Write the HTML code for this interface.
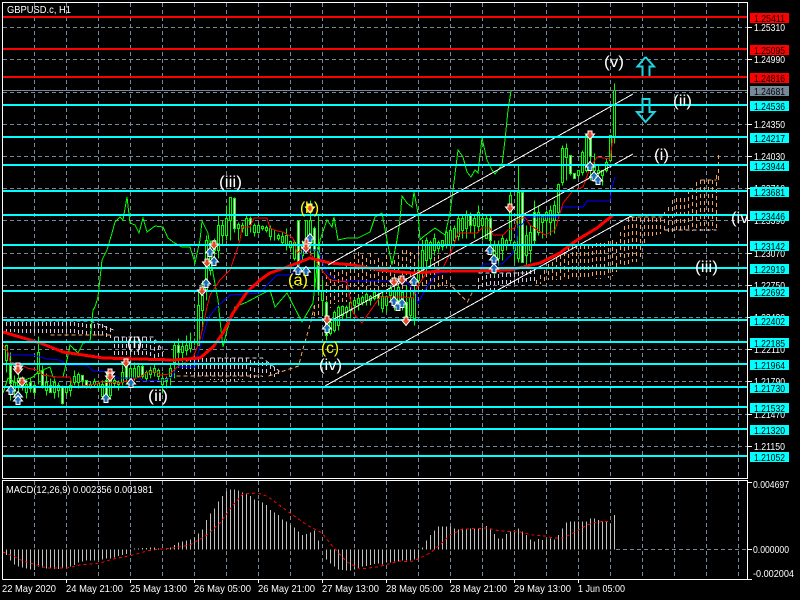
<!DOCTYPE html>
<html><head><meta charset="utf-8"><title>GBPUSD.c, H1</title>
<style>
html,body{margin:0;padding:0;background:#000;width:800px;height:600px;overflow:hidden}
svg{display:block}
text{font-family:"Liberation Sans",sans-serif;font-size:10.5px}
.w{font-size:16px;fill:#fff}
.y{font-size:16px;fill:#ff0}
.l{fill:#fff}
.t{fill:#000}
</style></head><body>
<svg width="800" height="600" viewBox="0 0 800 600" xmlns="http://www.w3.org/2000/svg">
<defs>
<clipPath id="m"><rect x="3" y="3" width="744" height="475"/></clipPath>
<g id="r"><path d="M-2 -4H2V-1H4.5L0 4.5L-4.5 -1H-2Z" fill="#e2492a" stroke="#fff" stroke-width="1"/></g>
<g id="b"><path d="M-2 4.5H2V1H4.5L0 -4.5L-4.5 1H-2Z" fill="#1b6db5" stroke="#fff" stroke-width="1"/></g>
</defs>
<rect width="800" height="600" fill="#000"/>
<!-- grid -->
<g stroke="#778899" stroke-width="1" stroke-dasharray="4 3" shape-rendering="crispEdges" fill="none">
<path d="M3 27.5H747M3 59.5H747M3 92.5H747M3 124.5H747M3 156.5H747M3 188.5H747M3 220.5H747M3 253.5H747M3 285.5H747M3 317.5H747M3 349.5H747M3 381.5H747M3 414.5H747M3 446.5H747"/>
<path d="M34.5 3V478M66.5 3V478M98.5 3V478M130.5 3V478M162.5 3V478M194.5 3V478M226.5 3V478M258.5 3V478M290.5 3V478M322.5 3V478M354.5 3V478M386.5 3V478M418.5 3V478M450.5 3V478M482.5 3V478M514.5 3V478M546.5 3V478M578.5 3V478M610.5 3V478M642.5 3V478M674.5 3V478M706.5 3V478M738.5 3V478"/>
<path d="M34.5 481V579M66.5 481V579M98.5 481V579M130.5 481V579M162.5 481V579M194.5 481V579M226.5 481V579M258.5 481V579M290.5 481V579M322.5 481V579M354.5 481V579M386.5 481V579M418.5 481V579M450.5 481V579M482.5 481V579M514.5 481V579M546.5 481V579M578.5 481V579M610.5 481V579M642.5 481V579M674.5 481V579M706.5 481V579M738.5 481V579"/>
<path d="M616 549.5H747"/>
</g>
<g clip-path="url(#m)">
<!-- cloud -->
<g fill="none" stroke-width="1" stroke-dasharray="4 3" shape-rendering="crispEdges" transform="translate(.5 0)">
<path stroke="#dcc8dc" d="M6 322V332M10 322V332M14 322V332M18 322V333M22 322V333M26 322V333M30 322V334M34 322V334M38 322V334M42 322V334M46 322V335M50 322V335M54 322V335M58 322V335M62 322V336M66 322V336M70 322V336M74 322V336M78 323V337M82 323V337M86 324V338M90 324V338M94 324V338M98 324V338M102 324V338M106 326V338M110 328V338M114 337V358M118 337V358M122 337V358M126 337V358M130 337V358M134 337V358M138 337V358M142 337V358M146 337V358M150 338V358M154 340V358M158 346V358M162 352V358M174 357V362M178 357V372M182 358V372M186 358V374M190 358V374M194 358V376M198 358V376M202 358V378M206 358V378M210 358V380M214 358V380M218 358V380M222 358V381M226 358V381M230 358V381M234 358V381M238 358V380M242 358V380M246 358V379M250 360V378M254 361V378M258 362V378M262 362V377M266 362V376M270 365V377M274 367V377M278 370V376M478 278V290M482 276V290M486 275V290M490 274V290M494 274V290M498 274V288M502 273V288M506 273V288M510 273V287M514 273V287M518 272V286M522 271V286M526 271V285M530 270V284M534 270V284"/>
<path stroke="#f4a460" d="M314 305V320M318 290V318M322 280V316M326 275V312M330 272V308M334 268V304M338 272V302M342 270V302M346 265V302M350 262V302M354 255V301M358 252V301M362 255V300M366 258V300M370 253V300M374 260V299M378 258V298M382 262V298M386 255V297M390 265V297M394 260V296M398 255V296M402 250V295M406 250V295M410 252V294M414 255V294M418 245V293M422 240V292M426 245V292M430 250V291M434 250V290M438 255V290M442 275V289M446 280V288M450 285V287M536 280V287M540 275V284M544 270V282M548 264V280M552 262V280M556 258V280M560 255V280M564 252V279M568 247V279M572 245V279M576 245V279M580 245V279M584 245V279M588 245V279M592 244V279M596 243V279M600 243V279M604 243V278M608 241V278M612 240V276M616 242V272M620 232V268M624 226V266M628 218V264M632 217V262M636 217V262M640 218V258M644 218V246M648 218V238M652 218V236M656 218V235M660 218V234M664 212V233M668 207V232M672 200V232M676 198V232M680 198V232M684 198V231M688 190V231M692 188V231M696 182V231M700 180V231M704 180V231M708 180V231M712 180V230M716 175V230"/>
<path stroke="#f4a460" d="M50 335H112M176 376H262M268 376L298 366L303 347L310 323L314 305M452 287L467 302L473 290M718 155V180M700 180H716M630 217H662"/>
<path stroke="#dcc8dc" d="M6 321H90L113 330M114 337H153L163 352M210 358H262L280 372M478 273H534M664 230H716"/>
</g>
<!-- candles -->
<g transform="translate(.5 .5)" fill="none" stroke="#0f0" stroke-width="1" shape-rendering="crispEdges">
<path d="M6 344V372M10 352V400M14 375V395M18 370V400M22 376V390M26 380V398M30 378V392M34 383V395M38 336V384M42 365V388M46 373V395M50 378V392M54 378V398M58 382V397M62 385V404M66 385V395M70 380V396M74 370V385M78 372V388M82 375V385M86 380V388M90 381V388M94 378V386M98 380V390M102 380V398M106 372V396M110 372V398M114 376V386M118 380V390M122 365V385M126 358V382M130 362V382M134 362V380M138 364V378M142 364V378M146 370V380M150 366V378M154 364V376M158 368V380M162 372V393M166 376V388M170 364V385M174 342V378M178 338V366M182 340V362M186 335V355M190 332V352M194 338V345M198 290V345M202 280V330M206 235V300M210 240V275M214 238V265M218 215V258M222 220V245M226 205V240M230 197V240M234 197V232M238 222V240M242 222V232M246 215V235M250 216V232M254 223V236M258 223V233M262 225V230M266 225V232M270 225V240M274 230V240M278 233V240M282 232V245M286 228V250M290 240V250M294 240V260M298 220V275M302 240V262M306 220V252M310 200V255M314 226V290M318 215V295M322 280V315M326 300V340M330 320V335M334 310V332M338 305V330M342 305V320M346 305V318M350 300V318M354 298V312M358 295V310M362 295V305M366 292V305M370 295V305M374 290V300M378 292V305M382 292V312M386 295V312M390 285V300M394 285V310M398 285V305M402 290V310M406 285V325M410 290V320M414 285V325M418 260V285M422 240V275M426 237V270M430 240V265M434 233V255M438 240V252M442 240V250M446 230V248M450 225V248M454 225V246M458 215V240M462 215V238M466 210V238M470 212V232M474 215V238M478 205V232M482 215V240M486 215V238M490 215V255M494 240V275M498 240V265M502 235V260M506 238V250M510 190V245M514 240V262M518 165V262M522 192V262M526 225V265M530 225V262M534 200V245M538 205V235M542 215V238M546 210V235M550 205V235M554 200V233M558 183V216M562 145V185M566 143V180M570 155V175M574 173V178M578 170V178M582 150V175M586 135V172M590 135V180M594 153V172M598 165V175M602 170V185M606 158V172M610 135V162M614 83V143"/>
<path fill="#000" d="M5 345h2v15h-2zM13 382h2v8h-2zM17 378h2v7h-2zM21 380h2v6h-2zM25 384h2v8h-2zM37 352h2v21h-2zM45 382h2v8h-2zM53 382h2v10h-2zM57 385h2v5h-2zM65 387h2v5h-2zM69 385h2v5h-2zM73 376h2v6h-2zM77 374h2v8h-2zM89 384h2v2h-2zM93 381h2v3h-2zM97 383h2v3h-2zM101 384h2v12h-2zM109 376h2v19h-2zM113 380h2v3h-2zM117 382h2v2h-2zM121 372h2v10h-2zM129 368h2v12h-2zM133 368h2v10h-2zM137 366h2v10h-2zM145 372h2v6h-2zM149 370h2v4h-2zM153 368h2v4h-2zM157 370h2v6h-2zM161 378h2v6h-2zM165 378h2v2h-2zM169 368h2v8h-2zM173 345h2v17h-2zM181 346h2v6h-2zM185 345h2v5h-2zM189 342h2v6h-2zM197 305h2v40h-2zM201 295h2v15h-2zM205 240h2v50h-2zM209 250h2v20h-2zM217 225h2v25h-2zM221 225h2v10h-2zM225 218h2v17h-2zM229 197h2v23h-2zM237 224h2v4h-2zM241 225h2v3h-2zM245 218h2v17h-2zM253 225h2v7h-2zM257 225h2v7h-2zM261 226h2v2h-2zM265 227h2v3h-2zM269 228h2v8h-2zM277 235h2v3h-2zM281 236h2v6h-2zM285 235h2v10h-2zM289 241h2v6h-2zM293 242h2v16h-2zM301 245h2v10h-2zM305 220h2v25h-2zM309 220h2v25h-2zM321 290h2v10h-2zM329 322h2v11h-2zM333 312h2v18h-2zM337 307h2v18h-2zM341 306h2v9h-2zM345 307h2v5h-2zM349 302h2v8h-2zM353 300h2v5h-2zM357 298h2v5h-2zM361 297h2v5h-2zM365 294h2v6h-2zM369 296h2v4h-2zM373 292h2v6h-2zM381 296h2v12h-2zM385 296h2v9h-2zM389 288h2v7h-2zM393 290h2v10h-2zM397 287h2v13h-2zM401 292h2v10h-2zM409 297h2v18h-2zM413 292h2v26h-2zM417 270h2v10h-2zM421 250h2v20h-2zM425 240h2v20h-2zM429 242h2v16h-2zM433 238h2v12h-2zM437 242h2v6h-2zM441 240h2v6h-2zM445 232h2v12h-2zM449 230h2v14h-2zM453 228h2v12h-2zM457 218h2v18h-2zM461 218h2v12h-2zM465 215h2v13h-2zM473 218h2v7h-2zM477 212h2v14h-2zM481 218h2v7h-2zM485 218h2v20h-2zM493 245h2v10h-2zM497 245h2v13h-2zM501 238h2v12h-2zM505 240h2v5h-2zM509 195h2v45h-2zM513 242h2v8h-2zM517 192h2v66h-2zM525 235h2v20h-2zM529 232h2v18h-2zM537 212h2v20h-2zM541 216h2v6h-2zM545 212h2v8h-2zM549 210h2v12h-2zM553 205h2v15h-2zM557 184h2v28h-2zM561 148h2v34h-2zM565 148h2v9h-2zM577 170h2v5h-2zM581 152h2v20h-2zM585 135h2v35h-2zM593 165h2v5h-2zM597 170h2v3h-2zM601 170h2v5h-2zM605 162h2v8h-2zM609 135h2v25h-2zM613 90h2v47h-2z"/>
<path fill="#fff" d="M9 365h2v18h-2zM29 382h2v6h-2zM33 385h2v7h-2zM41 370h2v15h-2zM49 385h2v7h-2zM61 387h2v16h-2zM81 375h2v5h-2zM85 380h2v6h-2zM105 380h2v16h-2zM125 366h2v12h-2zM141 366h2v10h-2zM177 345h2v7h-2zM213 240h2v10h-2zM233 198h2v30h-2zM249 218h2v6h-2zM297 220h2v45h-2zM313 228h2v22h-2zM317 247h2v43h-2zM325 302h2v33h-2zM377 294h2v4h-2zM405 302h2v21h-2zM469 215h2v10h-2zM489 218h2v22h-2zM521 192h2v70h-2zM533 212h2v28h-2zM569 155h2v18h-2zM573 173h2v5h-2zM589 135h2v21h-2z"/>
</g>
<!-- indicator lines -->
<g fill="none" shape-rendering="crispEdges">
<polyline stroke="#0f0" points="3,393 8,378 17,383 33,377 38,372 50,367 53,377 63,377 67,360 70,345 78,353 83,343 90,342 93,310 95,307 98,297 102,260 107,250 112,233 115,222 120,217 123,220 127,197 130,223 135,225 139,233 143,218 147,232 155,226 163,227 168,238 173,242 182,247 190,247 195,263 200,240 202,221 208,233 213,273 218,300 221,330 223,347 227,330 235,307 247,302 260,295 270,290 275,307 287,293 302,322 313,303 320,240 327,220 332,227 334,217 338,240 347,238 358,238 370,232 375,217 382,213 387,240 392,265 397,240 400,220 402,196 407,203 412,207 414,192 418,213 420,240 423,237 435,228 445,235 450,213 453,190 458,150 463,157 467,172 471,177 475,170 478,173 482,138 487,160 492,170 495,174 502,165 505,140 508,110 511,91"/>
<polyline stroke="#00f" points="3,345 10,355 33,355 47,359 60,360 67,365 87,365 93,371 110,372 115,378 140,378 143,381 165,380 172,377 177,367 195,367 197,357 203,337 208,318 217,307 230,295 260,293 267,285 277,275 290,275 298,268 303,250 318,250 327,273 337,281 390,281 407,282 417,295 418,303 427,287 437,273 480,270 483,264 502,264 513,253 517,240 518,225 523,224 525,217 558,217 563,207 583,207 587,201 610,201 612,187 615,177"/>
<polyline stroke="#f00" points="3,345 8,352 10,362 20,364 27,368 37,370 43,375 57,377 70,377 73,387 97,384 100,382 120,383 140,377 148,372 157,372 160,375 170,374 177,367 193,358 200,340 207,307 210,295 220,280 230,270 237,250 240,240 242,227 250,227 254,218 267,218 270,228 277,231 283,232 293,238 297,253 305,247 313,257 320,268 330,280 347,282 353,313 362,323 380,297 390,297 403,297 413,298 417,287 427,272 443,268 453,247 458,233 477,233 482,228 490,228 493,235 503,235 508,230 515,228 517,220 525,217 530,225 545,235 555,230 563,203 572,192 583,187 590,168 597,157 610,159 613,138"/>
</g>
<polyline fill="none" stroke="#f00" stroke-width="3" shape-rendering="crispEdges" points="3,332 30,340 43,344 63,352 83,355 103,358 140,359 173,360 200,358 213,347 223,333 233,313 247,292 260,280 270,273 290,266 310,258 330,263 353,265 380,270 413,273 443,271 470,271 510,270 540,263 560,253 577,240 597,228 613,215"/>
<!-- channels -->
<g stroke="#fff" fill="none" stroke-width="1" shape-rendering="crispEdges">
<path d="M325 386L633 215M325 324L633 154M328 265L633 94"/>
</g>
<!-- levels -->
<g shape-rendering="crispEdges">
<path stroke="#778899" d="M3 90.5H747"/>
<path stroke="#f00" stroke-width="2" d="M3 17H747M3 49H747M3 77H747"/>
<path stroke="#0ff" stroke-width="2" d="M3 105H747M3 137H747M3 165H747M3 191H747M3 215H747M3 245H747M3 268H747M3 291H747M3 320H747M3 342H747M3 364H747M3 387H747M3 407H747M3 429H747M3 456H747"/>
</g>
<!-- markers -->
<use href="#r" x="18" y="367"/><use href="#r" x="18" y="370"/><use href="#r" x="22" y="382"/><use href="#r" x="126" y="363"/><use href="#r" x="110" y="373"/><use href="#r" x="110" y="377"/><use href="#r" x="214" y="245"/><use href="#r" x="207" y="263"/><use href="#r" x="202" y="291"/><use href="#r" x="310" y="208"/><use href="#r" x="307" y="243"/><use href="#r" x="306" y="248"/><use href="#r" x="327" y="320"/><use href="#r" x="394" y="282"/><use href="#r" x="402" y="280"/><use href="#r" x="406" y="321"/><use href="#r" x="510" y="208"/><use href="#r" x="590" y="135"/>
<use href="#b" x="11" y="390"/><use href="#b" x="18" y="396"/><use href="#b" x="18" y="400"/><use href="#b" x="106" y="398"/><use href="#b" x="131" y="383"/><use href="#b" x="210" y="252"/><use href="#b" x="214" y="261"/><use href="#b" x="206" y="283"/><use href="#b" x="298" y="270"/><use href="#b" x="306" y="271"/><use href="#b" x="327" y="328"/><use href="#b" x="394" y="301"/><use href="#b" x="398" y="306"/><use href="#b" x="402" y="303"/><use href="#b" x="414" y="281"/><use href="#b" x="490" y="250"/><use href="#b" x="494" y="259"/><use href="#b" x="494" y="268"/><use href="#b" x="310" y="238"/><use href="#b" x="590" y="166"/><use href="#b" x="594" y="176"/><use href="#b" x="598" y="180"/>
<!-- arrows -->
<path d="M645.5 57L637.5 66.5H642.5V76M649.5 76V66.5H654L645.5 57" fill="none" stroke="#1fd5e0" stroke-width="2"/>
<path d="M642.5 99V112H637L645.5 122L654.5 112H649.5V99Z" fill="none" stroke="#1fd5e0" stroke-width="2"/>
<!-- wave labels -->
<text class="w" x="219" y="187" textLength="23" lengthAdjust="spacingAndGlyphs">(iii)</text>
<text class="y" x="300" y="213" textLength="19" lengthAdjust="spacingAndGlyphs">(b)</text>
<text class="y" x="288" y="285" textLength="20" lengthAdjust="spacingAndGlyphs">(a)</text>
<text class="y" x="321" y="353" textLength="18" lengthAdjust="spacingAndGlyphs">(c)</text>
<text class="w" x="319" y="370" textLength="23" lengthAdjust="spacingAndGlyphs">(iv)</text>
<text class="w" x="127" y="348" textLength="15" lengthAdjust="spacingAndGlyphs">(i)</text>
<text class="w" x="148" y="401" textLength="20" lengthAdjust="spacingAndGlyphs">(ii)</text>
<text class="w" x="604" y="67" textLength="20" lengthAdjust="spacingAndGlyphs">(v)</text>
<text class="w" x="673" y="106" textLength="19" lengthAdjust="spacingAndGlyphs">(ii)</text>
<text class="w" x="654" y="160" textLength="15" lengthAdjust="spacingAndGlyphs">(i)</text>
<text class="w" x="731" y="223" textLength="23" lengthAdjust="spacingAndGlyphs">(iv)</text>
<text class="w" x="695" y="272" textLength="23" lengthAdjust="spacingAndGlyphs">(iii)</text>
</g>
<!-- MACD -->
<g transform="translate(0 470) scale(1 .33333)" fill="none" shape-rendering="crispEdges">
<path stroke="#c0c0c0" vector-effect="non-scaling-stroke" d="M6.5 238V255M10.5 238V272M14.5 238V283M18.5 238V290M22.5 238V293M26.5 238V295M30.5 238V298M34.5 238V300M38.5 238V290M42.5 238V292M46.5 238V295M50.5 238V296M54.5 238V297M58.5 238V297M62.5 238V296M66.5 238V293M70.5 238V290M74.5 238V285M78.5 238V278M82.5 238V275M86.5 238V272M90.5 238V272M94.5 238V272M98.5 238V270M102.5 238V268M106.5 238V266M110.5 238V265M114.5 238V262M118.5 238V258M122.5 238V255M126.5 238V252M130.5 238V245M134.5 235V238M138.5 235V238M142.5 234V238M146.5 234V238M150.5 232V238M154.5 232V238M158.5 236V238M162.5 236V238M166.5 236V238M170.5 232V238M174.5 225V238M178.5 218V238M182.5 214V238M186.5 212V238M190.5 208V238M194.5 203V238M198.5 190V238M202.5 178V238M206.5 150V238M210.5 130V238M214.5 115V238M218.5 95V238M222.5 78V238M226.5 65V238M230.5 58V238M234.5 58V238M238.5 62V238M242.5 68V238M246.5 70V238M250.5 78V238M254.5 88V238M258.5 92V238M262.5 98V238M266.5 105V238M270.5 120V238M274.5 128V238M278.5 135V238M282.5 148V238M286.5 155V238M290.5 165V238M294.5 172V238M298.5 185V238M302.5 195V238M306.5 192V238M310.5 188V238M314.5 182V238M318.5 212V238M326.5 238V268M330.5 238V280M334.5 238V290M338.5 238V298M342.5 238V300M346.5 238V302M350.5 238V302M354.5 238V298M358.5 238V295M362.5 238V290M366.5 238V288M370.5 238V285M374.5 238V282M378.5 238V280M382.5 238V283M386.5 238V278M390.5 238V278M394.5 238V275M398.5 238V275M402.5 238V272M406.5 238V272M410.5 238V272M414.5 238V268M418.5 238V265M422.5 232V238M426.5 212V238M430.5 195V238M434.5 182V238M438.5 170V238M442.5 170V238M446.5 170V238M450.5 170V238M454.5 175V238M458.5 178V238M462.5 175V238M466.5 175V238M470.5 175V238M474.5 175V238M478.5 175V238M482.5 172V238M486.5 168V238M490.5 175V238M494.5 192V238M498.5 205V238M502.5 205V238M506.5 192V238M510.5 185V238M514.5 188V238M518.5 175V238M522.5 185V238M526.5 195V238M530.5 208V238M534.5 215V238M538.5 207V238M542.5 210V238M546.5 208V238M550.5 205V238M554.5 208V238M558.5 195V238M562.5 175V238M566.5 158V238M570.5 155V238M574.5 155V238M578.5 155V238M582.5 155V238M586.5 155V238M590.5 145V238M594.5 145V238M598.5 150V238M602.5 155V238M606.5 155V238M610.5 160V238M614.5 135V238"/>
</g>
<g fill="none" stroke="#f00" stroke-dasharray="3 3" shape-rendering="crispEdges">
<polyline points="3,552 13,556 23,561 37,565 47,568 67,568 80,565 100,563 113,559 133,555 147,551 160,549 173,548 190,545 207,535 220,523 233,505 243,494 257,493 267,496 290,513 307,525 322,533 333,547 347,562 360,569 377,567 400,561 410,562 418,559 430,553 442,543 450,535 463,529 487,528 500,531 520,532 533,535 545,536 553,538 563,538 577,531 587,525 597,522 612,521"/>
</g>
<!-- frames -->
<g fill="none" stroke="#fff" stroke-width="1" shape-rendering="crispEdges">
<path d="M2.5 478.5V2.5H747.5V478.5H2.5"/>
<path d="M2.5 579.5V480.5H747.5V579.5H2.5"/>
<path d="M748 27.5h4M748 59.5h4M748 124.5h4M748 156.5h4M748 188.5h4M748 220.5h4M748 253.5h4M748 285.5h4M748 317.5h4M748 349.5h4M748 381.5h4M748 414.5h4M748 446.5h4M748 482.5h4M748 549.5h4M748 579.5h4"/>
<path d="M66.5 580v3M130.5 580v3M194.5 580v3M258.5 580v3M322.5 580v3M386.5 580v3M450.5 580v3M514.5 580v3M578.5 580v3"/>
</g>
<!-- axis labels -->
<text class="l" x="754" y="31" textLength="31" lengthAdjust="spacingAndGlyphs">1.25310</text>
<text class="l" x="754" y="63" textLength="31" lengthAdjust="spacingAndGlyphs">1.24990</text>
<text class="l" x="754" y="128" textLength="31" lengthAdjust="spacingAndGlyphs">1.24350</text>
<text class="l" x="754" y="160" textLength="31" lengthAdjust="spacingAndGlyphs">1.24030</text>
<text class="l" x="754" y="192" textLength="31" lengthAdjust="spacingAndGlyphs">1.23710</text>
<text class="l" x="754" y="224" textLength="31" lengthAdjust="spacingAndGlyphs">1.23390</text>
<text class="l" x="754" y="257" textLength="31" lengthAdjust="spacingAndGlyphs">1.23070</text>
<text class="l" x="754" y="289" textLength="31" lengthAdjust="spacingAndGlyphs">1.22750</text>
<text class="l" x="754" y="321" textLength="31" lengthAdjust="spacingAndGlyphs">1.22430</text>
<text class="l" x="754" y="353" textLength="31" lengthAdjust="spacingAndGlyphs">1.22110</text>
<text class="l" x="754" y="385" textLength="31" lengthAdjust="spacingAndGlyphs">1.21790</text>
<text class="l" x="754" y="418" textLength="31" lengthAdjust="spacingAndGlyphs">1.21470</text>
<text class="l" x="754" y="450" textLength="31" lengthAdjust="spacingAndGlyphs">1.21150</text>
<g shape-rendering="crispEdges">
<rect x="750" y="13" width="39" height="10" fill="#f00"/><rect x="750" y="45" width="39" height="10" fill="#f00"/><rect x="750" y="73" width="39" height="10" fill="#f00"/>
<rect x="750" y="86" width="39" height="10" fill="#778899"/>
<rect x="750" y="101" width="39" height="10" fill="#0ff"/><rect x="750" y="133" width="39" height="10" fill="#0ff"/><rect x="750" y="161" width="39" height="10" fill="#0ff"/><rect x="750" y="187" width="39" height="10" fill="#0ff"/><rect x="750" y="211" width="39" height="10" fill="#0ff"/><rect x="750" y="241" width="39" height="10" fill="#0ff"/><rect x="750" y="264" width="39" height="10" fill="#0ff"/><rect x="750" y="287" width="39" height="10" fill="#0ff"/><rect x="750" y="316" width="39" height="10" fill="#0ff"/><rect x="750" y="338" width="39" height="10" fill="#0ff"/><rect x="750" y="360" width="39" height="10" fill="#0ff"/><rect x="750" y="383" width="39" height="10" fill="#0ff"/><rect x="750" y="403" width="39" height="10" fill="#0ff"/><rect x="750" y="425" width="39" height="10" fill="#0ff"/><rect x="750" y="452" width="39" height="10" fill="#0ff"/>
</g>
<text class="t" x="754" y="22" textLength="31" lengthAdjust="spacingAndGlyphs">1.25411</text>
<text class="t" x="754" y="54" textLength="31" lengthAdjust="spacingAndGlyphs">1.25095</text>
<text class="t" x="754" y="82" textLength="31" lengthAdjust="spacingAndGlyphs">1.24816</text>
<text class="t" x="754" y="95" textLength="31" lengthAdjust="spacingAndGlyphs">1.24681</text>
<text class="t" x="754" y="110" textLength="31" lengthAdjust="spacingAndGlyphs">1.24536</text>
<text class="t" x="754" y="142" textLength="31" lengthAdjust="spacingAndGlyphs">1.24217</text>
<text class="t" x="754" y="170" textLength="31" lengthAdjust="spacingAndGlyphs">1.23944</text>
<text class="t" x="754" y="196" textLength="31" lengthAdjust="spacingAndGlyphs">1.23681</text>
<text class="t" x="754" y="220" textLength="31" lengthAdjust="spacingAndGlyphs">1.23446</text>
<text class="t" x="754" y="250" textLength="31" lengthAdjust="spacingAndGlyphs">1.23142</text>
<text class="t" x="754" y="273" textLength="31" lengthAdjust="spacingAndGlyphs">1.22919</text>
<text class="t" x="754" y="296" textLength="31" lengthAdjust="spacingAndGlyphs">1.22692</text>
<text class="t" x="754" y="325" textLength="31" lengthAdjust="spacingAndGlyphs">1.22402</text>
<text class="t" x="754" y="347" textLength="31" lengthAdjust="spacingAndGlyphs">1.22185</text>
<text class="t" x="754" y="369" textLength="31" lengthAdjust="spacingAndGlyphs">1.21964</text>
<text class="t" x="754" y="392" textLength="31" lengthAdjust="spacingAndGlyphs">1.21730</text>
<text class="t" x="754" y="412" textLength="31" lengthAdjust="spacingAndGlyphs">1.21532</text>
<text class="t" x="754" y="434" textLength="31" lengthAdjust="spacingAndGlyphs">1.21320</text>
<text class="t" x="754" y="461" textLength="31" lengthAdjust="spacingAndGlyphs">1.21052</text>
<text class="l" x="753" y="488" textLength="36" lengthAdjust="spacingAndGlyphs">0.004697</text>
<text class="l" x="753" y="553" textLength="36" lengthAdjust="spacingAndGlyphs">0.000000</text>
<text class="l" x="753" y="577" textLength="41" lengthAdjust="spacingAndGlyphs">-0.002004</text>
<text class="l" x="7" y="13" textLength="64" lengthAdjust="spacingAndGlyphs">GBPUSD.c, H1</text>
<text class="l" x="6" y="493" textLength="147" lengthAdjust="spacingAndGlyphs">MACD(12,26,9) 0.002356 0.001981</text>
<text class="l" x="2" y="592" textLength="54" lengthAdjust="spacingAndGlyphs">22 May 2020</text>
<text class="l" x="66" y="592" textLength="57" lengthAdjust="spacingAndGlyphs">24 May 21:00</text>
<text class="l" x="130" y="592" textLength="57" lengthAdjust="spacingAndGlyphs">25 May 13:00</text>
<text class="l" x="194" y="592" textLength="57" lengthAdjust="spacingAndGlyphs">26 May 05:00</text>
<text class="l" x="258" y="592" textLength="57" lengthAdjust="spacingAndGlyphs">26 May 21:00</text>
<text class="l" x="322" y="592" textLength="57" lengthAdjust="spacingAndGlyphs">27 May 13:00</text>
<text class="l" x="386" y="592" textLength="57" lengthAdjust="spacingAndGlyphs">28 May 05:00</text>
<text class="l" x="450" y="592" textLength="57" lengthAdjust="spacingAndGlyphs">28 May 21:00</text>
<text class="l" x="514" y="592" textLength="57" lengthAdjust="spacingAndGlyphs">29 May 13:00</text>
<text class="l" x="578" y="592" textLength="47" lengthAdjust="spacingAndGlyphs">1 Jun 05:00</text>
</svg>
</body></html>
